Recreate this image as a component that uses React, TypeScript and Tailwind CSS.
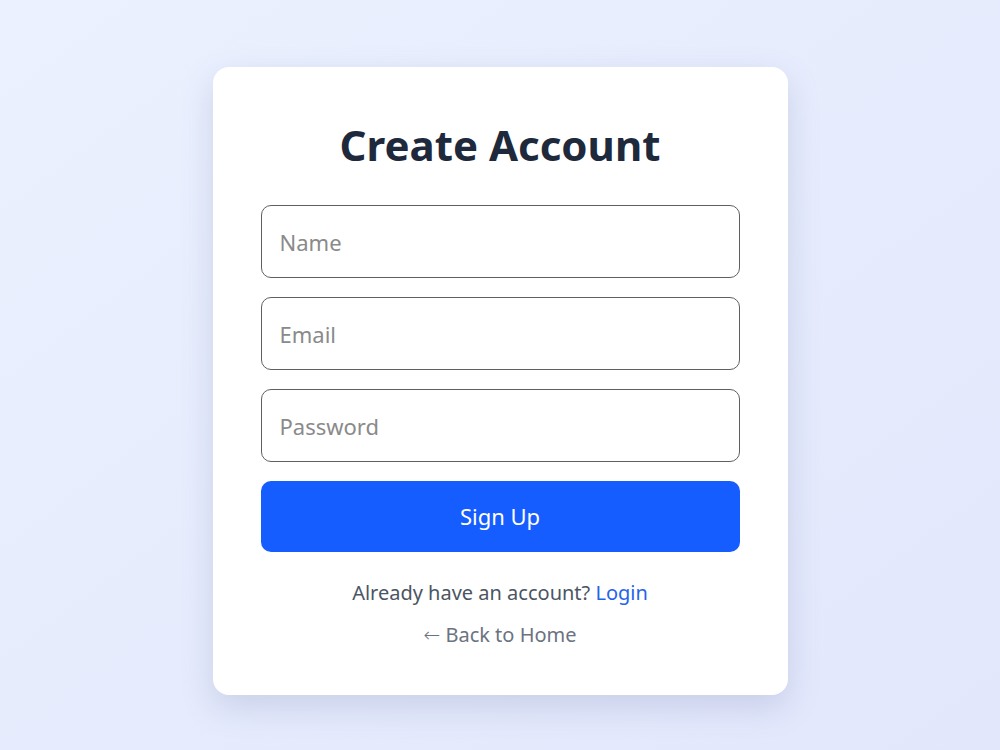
import { useState } from "react";

export default function App() {
  const [name, setName] = useState("");
  const [email, setEmail] = useState("");
  const [password, setPassword] = useState("");

  const inputClass =
    "block h-[73px] w-full rounded-[10px] border border-[#5f5f5f] bg-white px-[18px] text-[22px] text-[#1f2937] placeholder:text-[#8a8a8a] focus:outline-none";

  return (
    <div className="flex min-h-[750px] w-full items-start justify-center bg-gradient-to-br from-[#ebf1fe] to-[#e2e7fc] pt-[67px] font-['Noto_Sans','Open_Sans',sans-serif]">
      <div className="flex h-[628px] w-[575px] flex-col rounded-[16px] bg-white px-12 pt-[48px] shadow-[0_12px_32px_rgba(100,116,160,0.22)]">
        <h1 className="text-center text-[42px] font-bold leading-[60px] text-[#1e293b]">
          Create Account
        </h1>
        <form
          onSubmit={(e) => e.preventDefault()}
          className="mt-[30px] flex flex-col gap-[19px]"
        >
          <input
            value={name}
            onChange={(e) => setName(e.target.value)}
            placeholder="Name"
            className={inputClass}
          />
          <input
            type="email"
            value={email}
            onChange={(e) => setEmail(e.target.value)}
            placeholder="Email"
            className={inputClass}
          />
          <input
            type="password"
            value={password}
            onChange={(e) => setPassword(e.target.value)}
            placeholder="Password"
            className={inputClass}
          />
          <button
            type="submit"
            className="h-[71px] w-full rounded-[10px] bg-[#165dff] text-[22px] text-white"
          >
            Sign Up
          </button>
        </form>
        <p className="mt-[26px] text-center text-[20px] leading-[30px] text-[#4b5563]">
          Already have an account?{" "}
          <a href="#" className="text-[#2563eb]">
            Login
          </a>
        </p>
        <a
          href="#"
          className="mt-[12px] block text-center text-[20px] leading-[30px] text-[#6b7280]"
        >
          <span className="font-['DejaVu_Sans',sans-serif] text-[20px] font-extralight">←</span>{" "}
          Back to Home
        </a>
      </div>
    </div>
  );
}
